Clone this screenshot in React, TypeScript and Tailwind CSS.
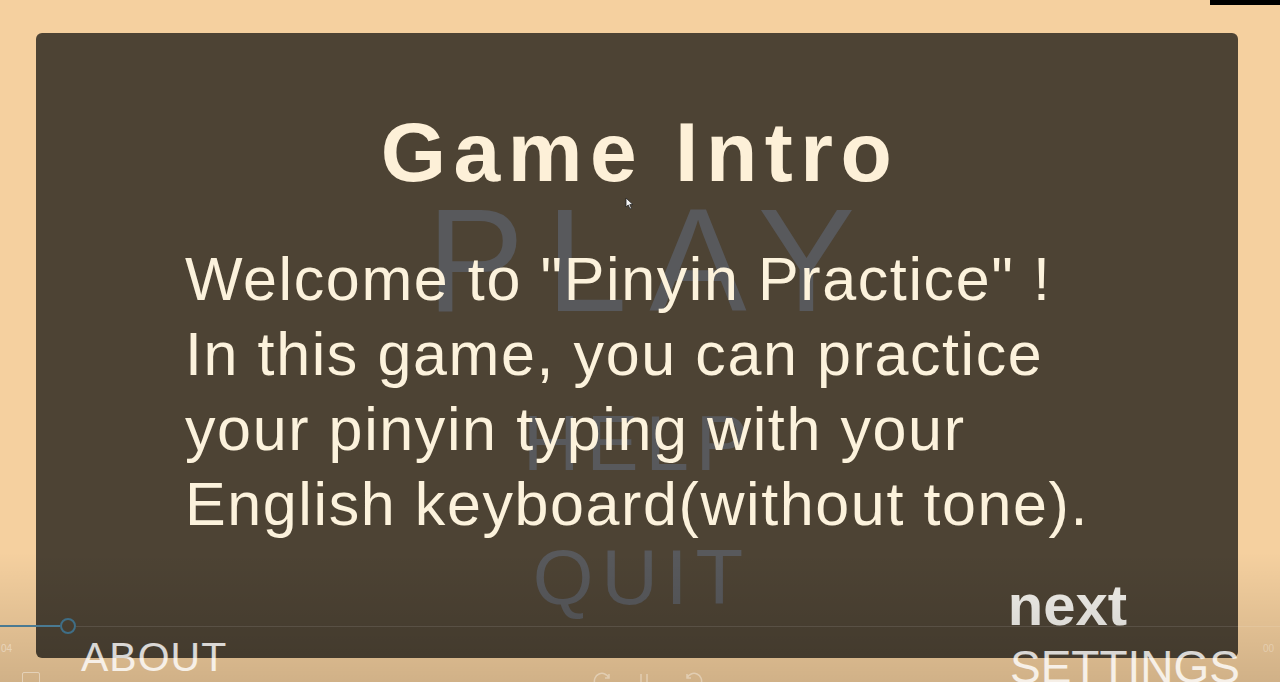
import React from "react"

export default function App() {
    return (
        <div className="relative w-full h-[682px] overflow-hidden bg-[#f5d09f] pt-[33px] pl-[36px] font-['Liberation_Sans',Arial,sans-serif]">

            {/* barra preta do canto */}
            <div className="absolute top-0 right-0 w-[70px] h-[5px] bg-black" />

            {/* Painel */}
            <div className="relative w-[1202px] h-[625px] rounded-[6px] bg-[#4d4334] flex flex-col">

                {/* menu por trás, visto através do painel */}
                <div className="absolute inset-0 flex flex-col items-center pt-[155px] text-[#58595c] pointer-events-none">
                    <div className="text-[146px] leading-none tracking-[22px] pl-[30px]">PLAY</div>
                    <div className="mt-[70px] text-[78px] leading-none tracking-[7px] pl-[4px]">HELP</div>
                    <div className="mt-[56px] text-[78px] leading-none tracking-[8px] pl-[10px]">QUIT</div>
                </div>

                <h1 className="relative mt-[77px] text-center text-[84px] leading-none font-bold tracking-[7.5px] text-[#fdf0d8] pl-[6px]">
                    Game Intro
                </h1>

                <p className="relative mt-[48px] ml-[149px] text-[61px] leading-[75px] tracking-[1.6px] text-[#fcf2dc]">
                    Welcome to "Pinyin Practice" !<br />
                    In this game, you can practice<br />
                    your pinyin typing with your<br />
                    English keyboard(without tone).
                </p>

                <div className="relative mt-auto mb-[24px] self-end mr-[111px] text-[58px] leading-none font-bold text-[#f1efea]">
                    next
                </div>

                {/* cursor */}
                <svg className="absolute left-[589px] top-[164px]" width="9" height="13" viewBox="0 0 9 13">
                    <path d="M1 1 L1 10 L3.2 8 L5 12 L6.5 11.3 L4.8 7.6 L8 7.6 Z" fill="#f4f4f4" stroke="#222" strokeWidth="0.8" />
                </svg>
            </div>

            {/* camada do player de vídeo */}
            <div className="absolute inset-x-0 bottom-0 h-[130px] bg-gradient-to-b from-transparent to-black/15 flex flex-col justify-end">
                <div className="flex items-center h-[16px]">
                    <div className="w-[60px] h-[2px] bg-[#4a7a92]" />
                    <div className="w-[16px] h-[16px] rounded-full border-2 border-[#3f6e86]" />
                    <div className="flex-1 h-[1px] bg-white/10" />
                </div>
                <div className="relative flex items-start justify-between h-[48px] px-[1px]">
                    <div className="flex flex-col gap-[18px] pt-[10px]">
                        <span className="text-[10px] leading-none text-white/40">04</span>
                        <span className="ml-[21px] w-[18px] h-[12px] border border-white/40 rounded-[2px]" />
                    </div>
                    <svg className="self-end mb-[-4px]" width="120" height="14" viewBox="0 0 120 14" fill="none" stroke="#ffffff" strokeOpacity="0.35" strokeWidth="1.5">
                        <path d="M4 12 A7 7 0 0 1 18 6 M18 2 L18 6 L14 6" />
                        <path d="M50 2 L50 14 M56 2 L56 14" />
                        <path d="M110 12 A7 7 0 0 0 96 6 M96 2 L96 6 L100 6" />
                    </svg>
                    <span className="pt-[10px] pr-[5px] text-[10px] leading-none text-white/30">00</span>
                </div>
            </div>

            {/* menu por cima */}
            <div className="absolute inset-x-0 bottom-0 h-[48px] flex items-start justify-between pl-[81px] pr-[40px] pointer-events-none">
                <span className="mt-[3px] text-[41px] leading-none tracking-[1px] text-white/80">ABOUT</span>
                <span className="mt-[10px] text-[46px] leading-none text-white/80">SETTINGS</span>
            </div>
        </div>
    )
}
